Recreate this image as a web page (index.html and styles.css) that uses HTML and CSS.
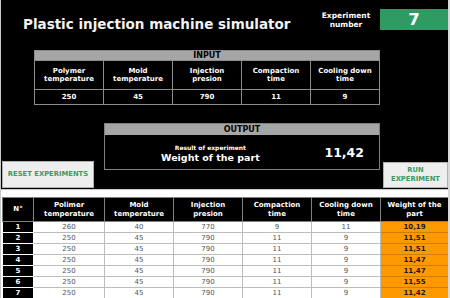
FILE: index.html
```html
<!DOCTYPE html>
<html lang="en">

<head>
    <meta charset="UTF-8">
    <meta name="viewport" content="width=device-width, initial-scale=1.0">
    <title>Plastic injection machine simulator</title>
    <link rel="stylesheet" href="styles.css">
</head>

<body>
    <div class="sheet">
        <header class="top">
            <h1 class="title">Plastic injection machine simulator</h1>
            <div class="exp-label">Experiment<br>number</div>
            <div class="exp-number">7</div>
        </header>

        <!-- Input parameters -->
        <div class="input">
            <div class="band">INPUT</div>
            <div class="label">Polymer<br>temperature</div>
            <div class="label">Mold<br>temperature</div>
            <div class="label">Injection<br>presion</div>
            <div class="label">Compaction<br>time</div>
            <div class="label">Cooling down<br>time</div>
            <div class="value">250</div>
            <div class="value">45</div>
            <div class="value">790</div>
            <div class="value">11</div>
            <div class="value">9</div>
        </div>

        <!-- Output + buttons -->
        <div class="middle">
            <button class="btn reset">RESET EXPERIMENTS</button>
            <div class="output">
                <div class="band">OUTPUT</div>
                <div class="result">
                    <div class="result-text">
                        <div class="result-caption">Result of experiment</div>
                        <div class="result-name">Weight of the part</div>
                    </div>
                    <div class="result-value">11,42</div>
                </div>
            </div>
            <button class="btn run">RUN<br>EXPERIMENT</button>
        </div>

        <!-- Experiment history -->
        <div class="history">
            <table class="log">
                <colgroup>
                    <col style="width: 31px">
                    <col style="width: 71px">
                    <col style="width: 69px">
                    <col style="width: 69px">
                    <col style="width: 69px">
                    <col style="width: 69px">
                    <col style="width: 68px">
                </colgroup>
                <tr>
                    <th>N°</th>
                    <th>Polimer<br>temperature</th>
                    <th>Mold<br>temperature</th>
                    <th>Injection<br>presion</th>
                    <th>Compaction<br>time</th>
                    <th>Cooling down<br>time</th>
                    <th>Weight of the<br>part</th>
                </tr>
                <tr><td class="num">1</td><td>260</td><td>40</td><td>770</td><td>9</td><td>11</td><td class="weight">10,19</td></tr>
                <tr><td class="num">2</td><td>250</td><td>45</td><td>790</td><td>11</td><td>9</td><td class="weight">11,51</td></tr>
                <tr><td class="num">3</td><td>250</td><td>45</td><td>790</td><td>11</td><td>9</td><td class="weight">11,51</td></tr>
                <tr><td class="num">4</td><td>250</td><td>45</td><td>790</td><td>11</td><td>9</td><td class="weight">11,47</td></tr>
                <tr><td class="num">5</td><td>250</td><td>45</td><td>790</td><td>11</td><td>9</td><td class="weight">11,47</td></tr>
                <tr><td class="num">6</td><td>250</td><td>45</td><td>790</td><td>11</td><td>9</td><td class="weight">11,55</td></tr>
                <tr><td class="num">7</td><td>250</td><td>45</td><td>790</td><td>11</td><td>9</td><td class="weight">11,42</td></tr>
            </table>
        </div>
    </div>
</body>

</html>
```

FILE: styles.css
```css
* {
    box-sizing: border-box;
}

body {
    margin: 0;
    background-color: #000;
    font-family: "DejaVu Sans", Verdana, sans-serif;
    color: #fff;
}

.sheet {
    width: 450px;
    height: 298px;
    overflow: hidden;
    border-left: 1px solid #c9c9c9;
    border-right: 2px solid #d9d9d9;
    background-color: #000;
}

/* Header */
.top {
    display: flex;
    align-items: flex-start;
    height: 50px;
}

.title {
    flex: 1;
    margin: 16px 0 0 22px;
    font-size: 13.5px;
    line-height: 16px;
    font-weight: bold;
    color: #f2f2f2;
}

.exp-label {
    width: 68px;
    margin-top: 11px;
    text-align: center;
    font-size: 7.5px;
    line-height: 9px;
    font-weight: bold;
}

.exp-number {
    width: 68px;
    height: 21px;
    margin-top: 9px;
    background-color: #2f9b63;
    text-align: center;
    font-size: 16.5px;
    line-height: 22px;
    font-weight: bold;
}

.band {
    background-color: #a6a6a6;
    color: #000;
    text-align: center;
    font-size: 8px;
    font-weight: bold;
}

/* Input table */
.input {
    display: grid;
    grid-template-columns: repeat(5, 1fr);
    gap: 1px;
    width: 346px;
    margin-left: 33px;
    padding: 1px;
    background-color: #8c8c8c;
}

.input .band {
    grid-column: 1 / -1;
    height: 9px;
    line-height: 10px;
}

.input .label,
.input .value {
    display: flex;
    align-items: center;
    justify-content: center;
    text-align: center;
    background-color: #000;
    font-weight: bold;
}

.input .label {
    height: 28px;
    font-size: 7px;
    line-height: 8.5px;
}

.input .value {
    height: 14px;
    font-size: 7px;
}

/* Output and buttons */
.middle {
    display: flex;
    align-items: flex-start;
    height: 65px;
    margin-top: 18px;
}

.btn {
    padding: 0;
    font-family: inherit;
    font-weight: bold;
    font-size: 6.8px;
    line-height: 9px;
    color: #3a9a62;
    background-color: #eeeeee;
    border: 1px solid #b0b0b0;
}

.reset {
    width: 92px;
    height: 27px;
    margin: 38px 0 0 1px;
}

.run {
    width: 65px;
    height: 26px;
    margin: 39px 0 0 3px;
}

.output {
    width: 276px;
    height: 47px;
    margin-left: 10px;
    border: 1px solid #808080;
}

.output .band {
    height: 11px;
    line-height: 12px;
}

.result {
    display: flex;
    align-items: flex-start;
}

.result-text {
    margin-left: 56px;
    padding-top: 9px;
    text-align: center;
    font-weight: bold;
}

.result-caption {
    font-size: 6px;
    line-height: 8px;
}

.result-name {
    font-size: 9.5px;
    line-height: 11px;
}

.result-value {
    margin: 10px 15px 0 auto;
    font-size: 12.5px;
    line-height: 15px;
    font-weight: bold;
}

/* History table */
.history {
    height: 200px;
    margin-top: 1px;
    padding: 7px 0 0 1px;
    background-color: #fff;
    border-top: 1px solid #c8c8c8;
}

.log {
    width: 446px;
    border-collapse: collapse;
    table-layout: fixed;
}

.log th {
    height: 24px;
    padding: 0;
    background-color: #000;
    color: #fff;
    border: 1px solid #808080;
    font-size: 7px;
    line-height: 8.5px;
}

.log td {
    height: 11px;
    padding: 0;
    border: 1px solid #bdbdbd;
    text-align: center;
    font-size: 7px;
    line-height: 9px;
    color: #555;
}

.log td.num {
    background-color: #000;
    color: #fff;
    font-weight: bold;
    border-color: #fff;
}

.log td.weight {
    background-color: #ff9900;
    color: #1a1a1a;
    font-weight: bold;
    border-color: #d07c00;
}
```
